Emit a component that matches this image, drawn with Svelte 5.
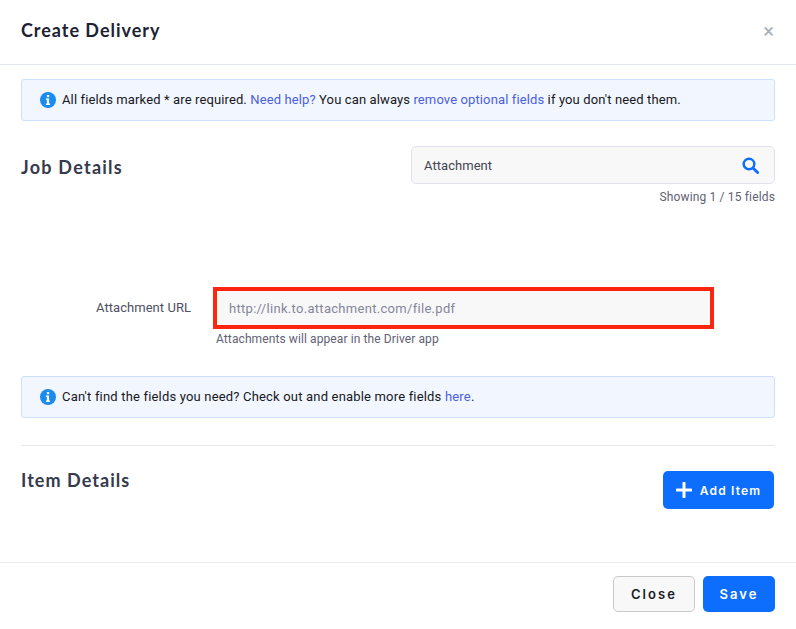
<script>
  const infoPath = "M8 0a8 8 0 1 0 0 16A8 8 0 0 0 8 0z";
</script>

<div class="modal">
  <header class="head">
    <h1>Create Delivery</h1>
    <span class="close-x">×</span>
  </header>
  <main class="body">
    <div class="alert first">
      <svg class="info" viewBox="0 0 16 16"><path d={infoPath} fill="#1a8cf0"/><rect x="6.9" y="3" width="2.3" height="2.3" rx=".6" fill="#fff"/><path d="M5.9 6.6h3.2v5h1v1.4H5.9v-1.4h1v-3.6h-1z" fill="#fff"/></svg>
      <span class="msg">All fields marked * are required. <a href="#a">Need help?</a> You can always <a href="#a">remove optional fields</a> if you don't need them.</span>
    </div>
    <section class="job">
      <h2>Job Details</h2>
      <div class="search-col">
        <div class="search">
          <span>Attachment</span>
          <svg viewBox="0 0 18 18" class="mag"><circle cx="7.4" cy="7.4" r="5.6" fill="none" stroke="#0d6efd" stroke-width="2.6"/><path d="M11.6 11.6l4.9 4.9" stroke="#0d6efd" stroke-width="3" stroke-linecap="round"/></svg>
        </div>
        <div class="showing">Showing 1 / 15 fields</div>
      </div>
    </section>
    <section class="field">
      <div class="label">Attachment URL</div>
      <div class="input-col">
        <div class="input">http://link.to.attachment.com/file.pdf</div>
        <div class="help">Attachments will appear in the Driver app</div>
      </div>
    </section>
    <div class="alert second">
      <svg class="info" viewBox="0 0 16 16"><path d={infoPath} fill="#1a8cf0"/><rect x="6.9" y="3" width="2.3" height="2.3" rx=".6" fill="#fff"/><path d="M5.9 6.6h3.2v5h1v1.4H5.9v-1.4h1v-3.6h-1z" fill="#fff"/></svg>
      <span class="msg">Can't find the fields you need? Check out and enable more fields <a href="#a">here</a>.</span>
    </div>
    <section class="items">
      <h2>Item Details</h2>
      <button class="btn primary add">
        <svg viewBox="0 0 16 16" class="plus"><path d="M8 1v14M1 8h14" stroke="#fff" stroke-width="3" stroke-linecap="round"/></svg>
        Add Item
      </button>
    </section>
  </main>
  <footer class="foot">
    <button class="btn plain">Close</button>
    <button class="btn primary save">Save</button>
  </footer>
</div>

<style>
  :global(body) { margin: 0; background: #fff; }
  .modal { width: 796px; height: 629px; display: flex; flex-direction: column; font-family: Roboto, "Liberation Sans", sans-serif; box-sizing: border-box; overflow: hidden; }
  .head { height: 64px; flex: none; border-bottom: 1px solid #e3e7f1; display: flex; align-items: center; justify-content: space-between; padding: 0 22px 0 21px; }
  h1 { margin: -4px 0 0; font: 700 18px Lato, sans-serif; letter-spacing: .97px; color: #1d2233; }
  h2 { margin: 0; font: 700 18px Lato, sans-serif; letter-spacing: 1.05px; color: #363a4d; }
  .close-x { color: #a9adb5; font-size: 20px; line-height: 20px; margin-top: -3px; }
  .body { flex: 1; padding: 14px 21px 0; display: flex; flex-direction: column; }
  .alert { height: 42px; box-sizing: border-box; border: 1px solid #cfe0fa; border-radius: 3px; background: #f2f6fe; display: flex; align-items: center; gap: 6px; padding-left: 18px; font-size: 13px; letter-spacing: .12px; color: #16181d; }
  .alert a { color: #4a5fdc; text-decoration: none; }
  .msg { margin-top: -2px; }
  .info { width: 16px; height: 16px; flex: none; margin-top: -1px; }
  .job { display: flex; justify-content: space-between; margin-top: 25px; }
  .job h2 { margin-top: 10px; letter-spacing: 1.25px; }
  .search-col { width: 364px; }
  .search { height: 38px; box-sizing: border-box; background: #f8f8f9; border: 1px solid #e1e2ee; border-radius: 5px; display: flex; align-items: center; justify-content: space-between; padding: 0 15px 0 12px; font-size: 13px; letter-spacing: .05px; color: #43444f; }
  .mag { width: 17px; height: 17px; }
  .showing { margin-top: 6px; text-align: right; font-size: 12px; letter-spacing: .15px; line-height: 14px; color: #5f6273; }
  .field { display: flex; margin-top: 83px; }
  .label { width: 170px; text-align: right; font-size: 13px; letter-spacing: .05px; color: #4e5060; line-height: 42px; }
  .input-col { margin-left: 22px; }
  .input { width: 501px; height: 42px; box-sizing: border-box; border: 4px solid #ff2510; background: #f8f8f9; padding-left: 12px; display: flex; align-items: center; font-size: 13px; letter-spacing: .3px; color: #84869a; }
  .help { margin: 3px 0 0 3px; font-size: 12px; letter-spacing: .1px; line-height: 14px; color: #5f6273; }
  .second { margin-top: 30px; letter-spacing: .18px; }
  .items { margin-top: 27px; border-top: 1px solid #e8e9ee; padding-top: 23px; display: flex; justify-content: space-between; align-items: flex-start; }
  .items > .add { margin: 2px 1px 0 0; }
  .btn { border: 0; border-radius: 5px; font-family: Inter, sans-serif; font-weight: 600; cursor: pointer; display: flex; align-items: center; justify-content: center; }
  .primary { background: #0d6efd; color: #fff; }
  .add { width: 111px; height: 38px; gap: 8px; font-size: 12px; letter-spacing: 1.15px; padding: 0; }
  .plus { width: 16px; height: 16px; }
  .foot { height: 67px; flex: none; border-top: 1px solid #ededf0; box-sizing: border-box; display: flex; justify-content: flex-end; align-items: flex-start; padding: 13px 21px 0; gap: 8px; }
  .foot .btn { height: 36px; font-size: 13px; letter-spacing: 2.1px; padding: 0; }
  .plain { width: 82px; background: #f8f8f8; color: #1b1b1f; border: 1px solid #c9c9cc; }
  .save { width: 72px; }
</style>
